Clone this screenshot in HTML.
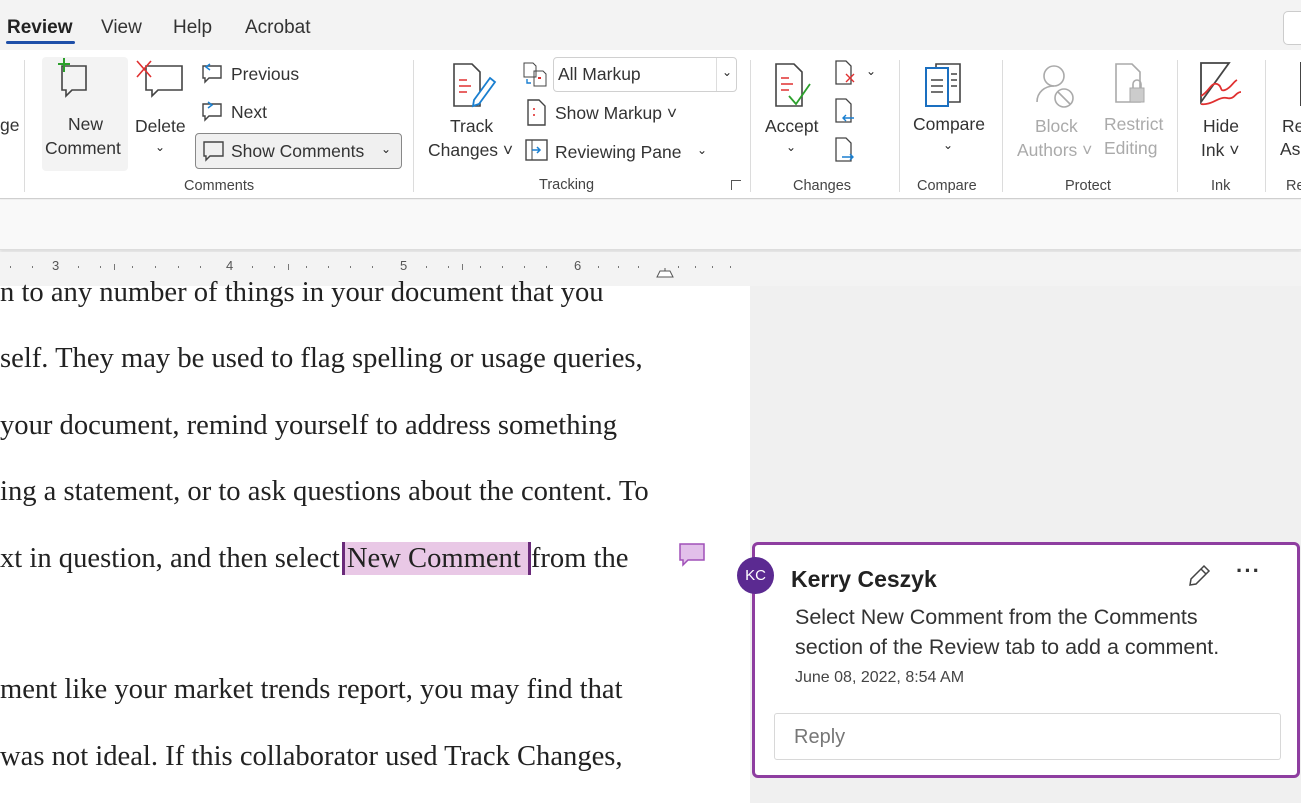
<!DOCTYPE html>
<html><head><meta charset="utf-8"><style>
*{margin:0;padding:0;box-sizing:border-box}
body{width:1301px;height:803px;overflow:hidden;background:#f0f0f0;font-family:"Liberation Sans",sans-serif;position:relative;color:#252525}
.a{position:absolute;white-space:nowrap}
.t{font-size:19px;color:#333}
.s{font-size:17.5px;color:#333}
.g{font-size:14.5px;color:#444}
.sep{position:absolute;top:60px;width:1px;height:132px;background:#dcdcdc}
.doc{font-family:"Liberation Serif",serif;font-size:28.6px;color:#222}
</style></head><body>
<div class="a" style="left:0;top:0;width:1301px;height:50px;background:#f3f3f3"></div>
<div class="a t" style="left:7px;top:17px;font-weight:bold;color:#222">Review</div>
<div class="a" style="left:6px;top:41px;width:69px;height:3px;background:#1e4fa8;border-radius:2px"></div>
<div class="a t" style="left:101px;top:17px">View</div>
<div class="a t" style="left:173px;top:17px">Help</div>
<div class="a t" style="left:245px;top:17px">Acrobat</div>
<div class="a" style="left:1283px;top:11px;width:30px;height:34px;border:1px solid #ccc;border-radius:5px;background:#fff"></div>
<div class="a" style="left:0;top:50px;width:1301px;height:149px;background:#fff;border-bottom:1px solid #cfcfcf"></div>
<div class="a" style="left:0;top:200px;width:1301px;height:50px;background:#f9f9f9;border-bottom:1px solid #ddd;box-shadow:0 2px 3px #ddd"></div>
<div class="a s" style="left:0;top:115px">ge</div>
<div class="sep" style="left:24px"></div>
<div class="a" style="left:42px;top:57px;width:86px;height:114px;background:#f3f3f3;border-radius:4px"></div>
<svg class="a" style="left:50px;top:58px" width="60" height="50"><path d="M12 8h24v24H22l-6 6v-6h-4z" fill="none" stroke="#444" stroke-width="1.6"/><path d="M8 6h12M14 0v14" stroke="#2ca02c" stroke-width="2"/></svg>
<div class="a s" style="left:68px;top:114px">New</div>
<div class="a s" style="left:45px;top:138px">Comment</div>
<svg class="a" style="left:134px;top:58px" width="52" height="50"><path d="M12 8h36v24H24l-6 6v-6h-6z" fill="none" stroke="#444" stroke-width="1.6"/><path d="M3 3l14 16M17 3L3 19" stroke="#e03030" stroke-width="1.6"/></svg>
<div class="a s" style="left:135px;top:116px">Delete</div>
<div class="a" style="left:155px;top:140px;font-size:12px">⌄</div>
<svg class="a" style="left:200px;top:62px" width="24" height="24"><path d="M3 4h18v12H9l-4 4v-4H3z" fill="none" stroke="#444" stroke-width="1.4"/><path d="M10 2L6 5l4 3" fill="none" stroke="#1a7fd0" stroke-width="1.5"/></svg>
<div class="a s" style="left:231px;top:64px">Previous</div>
<svg class="a" style="left:200px;top:100px" width="24" height="24"><path d="M3 4h18v12H9l-4 4v-4H3z" fill="none" stroke="#444" stroke-width="1.4"/><path d="M8 2l4 3-4 3" fill="none" stroke="#1a7fd0" stroke-width="1.5"/></svg>
<div class="a s" style="left:231px;top:102px">Next</div>
<div class="a" style="left:195px;top:133px;width:207px;height:36px;background:#f0f0f0;border:1px solid #888;border-radius:4px"></div>
<svg class="a" style="left:201px;top:138px" width="24" height="26"><path d="M3 4h19v14H9l-4 4v-4H3z" fill="none" stroke="#444" stroke-width="1.4"/></svg>
<div class="a s" style="left:231px;top:141px">Show Comments</div>
<div class="a" style="left:381px;top:142px;font-size:12px">⌄</div>
<div class="a g" style="left:184px;top:178px">Comments</div>
<div class="sep" style="left:413px"></div>
<svg class="a" style="left:450px;top:62px" width="48" height="50"><path d="M4 2h18l8 8v34H4z" fill="none" stroke="#444" stroke-width="1.6"/><path d="M9 18h8M9 24h12M9 30h8" stroke="#e03030" stroke-width="1.6"/><path d="M40 16l5 4-16 22-6 2 1-6z" fill="#fff" stroke="#1a7fd0" stroke-width="1.8"/></svg>
<div class="a s" style="left:450px;top:116px">Track</div>
<div class="a s" style="left:428px;top:140px">Changes ˅</div>
<svg class="a" style="left:522px;top:62px" width="26" height="26"><path d="M2 1h9l3 3v11H2z" fill="none" stroke="#444"/><path d="M12 9h9l3 3v12H12z" fill="none" stroke="#444"/><path d="M5 17v4h4" fill="none" stroke="#1a7fd0" stroke-width="1.4"/><path d="M16 16h3" stroke="#e03030" stroke-width="2"/></svg>
<div class="a" style="left:553px;top:57px;width:184px;height:35px;border:1px solid #d0d0d0;border-radius:4px"></div>
<div class="a" style="left:716px;top:58px;width:1px;height:33px;background:#ddd"></div>
<div class="a s" style="left:558px;top:64px">All Markup</div>
<div class="a" style="left:722px;top:65px;font-size:12px">⌄</div>
<svg class="a" style="left:526px;top:99px" width="22" height="28"><path d="M2 1h11l6 6v19H2z" fill="none" stroke="#444" stroke-width="1.4"/><path d="M8 9v2M8 15v2" stroke="#e03030" stroke-width="1.6"/></svg>
<div class="a s" style="left:555px;top:103px">Show Markup ˅</div>
<svg class="a" style="left:524px;top:138px" width="26" height="24"><rect x="2" y="2" width="21" height="20" fill="none" stroke="#444" stroke-width="1.4"/><path d="M8 2v20" stroke="#444"/><path d="M8 12h8M13 9l3 3-3 3" fill="none" stroke="#1a7fd0" stroke-width="1.5"/></svg>
<div class="a s" style="left:555px;top:142px">Reviewing Pane</div>
<div class="a" style="left:697px;top:143px;font-size:12px">⌄</div>
<div class="a g" style="left:539px;top:177px">Tracking</div>
<div class="a" style="left:731px;top:180px;width:10px;height:10px;border-left:1px solid #555;border-top:1px solid #555"></div>
<div class="sep" style="left:750px"></div>
<svg class="a" style="left:772px;top:62px" width="48" height="50"><path d="M4 2h18l8 8v34H4z" fill="none" stroke="#444" stroke-width="1.6"/><path d="M9 16h8M9 22h12M9 28h8" stroke="#e03030" stroke-width="1.6"/><path d="M17 34l7 8 14-20" fill="none" stroke="#2ca02c" stroke-width="1.8"/></svg>
<div class="a s" style="left:765px;top:116px">Accept</div>
<div class="a" style="left:786px;top:140px;font-size:12px">⌄</div>
<svg class="a" style="left:834px;top:60px" width="30" height="30"><path d="M2 1h10l5 5v18H2z" fill="none" stroke="#444" stroke-width="1.3"/><path d="M12 14l8 8M20 14l-8 8" stroke="#e03030" stroke-width="1.4"/></svg>
<div class="a" style="left:866px;top:64px;font-size:12px">⌄</div>
<svg class="a" style="left:834px;top:98px" width="30" height="30"><path d="M2 1h10l5 5v18H2z" fill="none" stroke="#444" stroke-width="1.3"/><path d="M20 20H9M12 17l-3 3 3 3" fill="none" stroke="#1a7fd0" stroke-width="1.4"/></svg>
<svg class="a" style="left:834px;top:137px" width="30" height="30"><path d="M2 1h10l5 5v18H2z" fill="none" stroke="#444" stroke-width="1.3"/><path d="M8 20h11M16 17l3 3-3 3" fill="none" stroke="#1a7fd0" stroke-width="1.4"/></svg>
<div class="a g" style="left:793px;top:178px">Changes</div>
<div class="sep" style="left:899px"></div>
<svg class="a" style="left:922px;top:60px" width="50" height="50"><path d="M14 4h24v38H14z" fill="#fff" stroke="#444" stroke-width="1.6"/><path d="M4 8h22v38H4z" fill="#fff" stroke="#1a6fc0" stroke-width="2"/><path d="M9 20h12M9 26h12M9 32h12M29 14h6M29 20h6M29 26h6" stroke="#444" stroke-width="1.4"/></svg>
<div class="a s" style="left:913px;top:114px">Compare</div>
<div class="a" style="left:943px;top:138px;font-size:12px">⌄</div>
<div class="a g" style="left:917px;top:178px">Compare</div>
<div class="sep" style="left:1002px"></div>
<svg class="a" style="left:1032px;top:60px" width="50" height="50"><circle cx="22" cy="16" r="10" fill="none" stroke="#aaa" stroke-width="1.6"/><path d="M5 42c0-10 8-16 17-16" fill="none" stroke="#aaa" stroke-width="1.6"/><circle cx="32" cy="38" r="9" fill="#fff" stroke="#aaa" stroke-width="1.6"/><path d="M26 32l12 12" stroke="#aaa" stroke-width="1.6"/></svg>
<div class="a s" style="left:1035px;top:116px;color:#aaa">Block</div>
<div class="a s" style="left:1017px;top:140px;color:#aaa">Authors ˅</div>
<svg class="a" style="left:1112px;top:60px" width="50" height="50"><path d="M4 4h16l8 8v30H4z" fill="none" stroke="#aaa" stroke-width="1.6"/><rect x="18" y="28" width="14" height="14" fill="#ccc" stroke="#aaa"/><path d="M21 28v-4a4 4 0 0 1 8 0v4" fill="none" stroke="#aaa" stroke-width="1.6"/></svg>
<div class="a s" style="left:1104px;top:114px;color:#aaa">Restrict</div>
<div class="a s" style="left:1104px;top:138px;color:#aaa">Editing</div>
<div class="a g" style="left:1065px;top:178px">Protect</div>
<div class="sep" style="left:1177px"></div>
<svg class="a" style="left:1198px;top:60px" width="48" height="48"><path d="M3 3h28L3 42z" fill="none" stroke="#444" stroke-width="1.8"/><path d="M3 36c8-4 10-14 16-12s2 8 8 6 8-8 12-10M3 44c10 2 18-8 26-6s8-6 14-6" fill="none" stroke="#e03030" stroke-width="1.8"/></svg>
<div class="a s" style="left:1203px;top:116px">Hide</div>
<div class="a s" style="left:1201px;top:140px">Ink ˅</div>
<div class="a g" style="left:1211px;top:178px">Ink</div>
<div class="sep" style="left:1265px"></div>
<div class="a" style="left:1300px;top:62px;width:2px;height:44px;background:#444"></div>
<div class="a s" style="left:1282px;top:116px">Re</div>
<div class="a s" style="left:1280px;top:139px">As</div>
<div class="a g" style="left:1286px;top:178px">Re</div>
<div class="a" style="left:0;top:252px;width:1301px;height:34px;background:#f3f3f3"></div>
<div class="a" style="left:0;top:258px;width:750px;font-size:13px;color:#555">
<span class="a" style="left:52px">3</span><span class="a" style="left:226px">4</span><span class="a" style="left:400px">5</span><span class="a" style="left:574px">6</span></div>
<svg class="a" style="left:0;top:258px" width="750" height="24"><g fill="#777">
<rect x="10" y="8" width="1" height="2"/><rect x="32" y="8" width="1" height="2"/><rect x="78" y="8" width="1" height="2"/><rect x="100" y="8" width="1" height="2"/><rect x="114" y="6" width="1" height="6"/><rect x="132" y="8" width="1" height="2"/><rect x="155" y="8" width="1" height="2"/><rect x="178" y="8" width="1" height="2"/><rect x="200" y="8" width="1" height="2"/><rect x="252" y="8" width="1" height="2"/><rect x="274" y="8" width="1" height="2"/><rect x="288" y="6" width="1" height="6"/><rect x="306" y="8" width="1" height="2"/><rect x="328" y="8" width="1" height="2"/><rect x="350" y="8" width="1" height="2"/><rect x="372" y="8" width="1" height="2"/><rect x="426" y="8" width="1" height="2"/><rect x="448" y="8" width="1" height="2"/><rect x="462" y="6" width="1" height="6"/><rect x="480" y="8" width="1" height="2"/><rect x="502" y="8" width="1" height="2"/><rect x="524" y="8" width="1" height="2"/><rect x="546" y="8" width="1" height="2"/><rect x="598" y="8" width="1" height="2"/><rect x="618" y="8" width="1" height="2"/><rect x="638" y="8" width="1" height="2"/><rect x="678" y="8" width="1" height="2"/><rect x="695" y="8" width="1" height="2"/><rect x="712" y="8" width="1" height="2"/><rect x="730" y="8" width="1" height="2"/></g>
<path d="M657 19h16l-3-6h-10z M665 10v3" fill="#fff" stroke="#555"/></svg>
<div class="a" style="left:0;top:286px;width:750px;height:517px;background:#fff"></div>
<div class="a doc" style="left:0;top:277px">n to any number of things in your document that you</div>
<div class="a doc" style="left:0;top:343px">self. They may be used to flag spelling or usage queries,</div>
<div class="a doc" style="left:0;top:410px">your document, remind yourself to address something</div>
<div class="a doc" style="left:0;top:476px">ing a statement, or to ask questions about the content. To</div>
<div class="a doc" style="left:0;top:542px">xt in question, and then select<span style="display:inline-block;margin-left:2px;background:#e9c8e6;border-left:3px solid #6a2a7a;border-right:3px solid #6a2a7a;padding:0 7px 0 2px;line-height:33px">New Comment</span>from the</div>
<div class="a doc" style="left:0;top:674px">ment like your market trends report, you may find that</div>
<div class="a doc" style="left:0;top:741px">was not ideal. If this collaborator used Track Changes,</div>
<svg class="a" style="left:678px;top:542px" width="30" height="28"><path d="M2 2h24v16H10l-5 5v-5H2z" fill="#e2c0ea" stroke="#a050b8" stroke-width="1.5"/></svg>
<div class="a" style="left:752px;top:542px;width:548px;height:236px;background:#fff;border:3px solid #8e3ea0;border-radius:6px"></div>
<div class="a" style="left:737px;top:557px;width:37px;height:37px;border-radius:50%;background:#5b2a91;color:#fff;font-size:15px;text-align:center;line-height:37px">KC</div>
<div class="a" style="left:791px;top:566px;font-size:23px;font-weight:bold;color:#222">Kerry Ceszyk</div>
<svg class="a" style="left:1186px;top:563px" width="26" height="26"><path d="M4 22l1-6L18 3l5 5L10 21z M15 6l5 5" fill="none" stroke="#444" stroke-width="1.5"/></svg>
<div class="a" style="left:1236px;top:558px;font-size:22px;font-weight:bold;letter-spacing:1px;color:#333">···</div>
<div class="a" style="left:795px;top:605px;font-size:21.5px;color:#333">Select New Comment from the Comments</div>
<div class="a" style="left:795px;top:635px;font-size:21.5px;color:#333">section of the Review tab to add a comment.</div>
<div class="a" style="left:795px;top:669px;font-size:16px;color:#444">June 08, 2022, 8:54 AM</div>
<div class="a" style="left:774px;top:713px;width:507px;height:47px;border:1px solid #d8d8d8;border-radius:3px"></div>
<div class="a" style="left:794px;top:726px;font-size:20px;color:#777">Reply</div>
</body></html>
